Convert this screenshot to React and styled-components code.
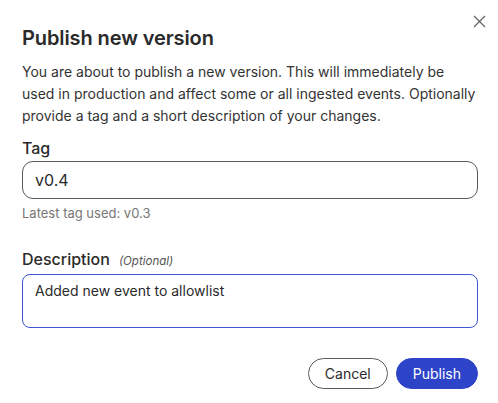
import React from "react";
import styled, { createGlobalStyle } from "styled-components";

const Global = createGlobalStyle`
  html, body { margin: 0; padding: 0; background: #ffffff; }
  body { font-family: Inter, "Noto Sans", sans-serif; color: #2b2b2b; }
  * { box-sizing: border-box; }
`;

const Dialog = styled.div`
  position: relative;
  width: 498px;
  height: 403px;
  padding: 24px 20px 0 22px;
  display: flex;
  flex-direction: column;
  background: #fff;
`;

const CloseButton = styled.button`
  position: absolute;
  top: 14px;
  right: 12px;
  width: 14px;
  height: 14px;
  padding: 0;
  border: none;
  background: none;
  display: flex;
  align-items: center;
  justify-content: center;
  cursor: pointer;
`;

const Title = styled.h2`
  margin: 0;
  font-size: 20px;
  line-height: 28px;
  font-weight: 600;
  color: #2a2a2a;
  letter-spacing: -0.1px;
`;

const Body = styled.p`
  margin: 9px 0 0;
  font-size: 14px;
  line-height: 22px;
  color: #333;
`;

const Field = styled.div`
  display: flex;
  flex-direction: column;
  margin-top: ${(p) => p.$top}px;
`;

const LabelRow = styled.label`
  display: flex;
  align-items: baseline;
  gap: 9px;
  font-size: 16px;
  line-height: 22px;
  font-weight: 500;
  color: #2a2a2a;
`;

const Optional = styled.span`
  font-size: 11.5px;
  font-style: italic;
  font-weight: 400;
  color: #555;
`;

const Input = styled.input`
  margin-top: 2px;
  width: 100%;
  height: 38px;
  border: 1px solid #5a5a5a;
  border-radius: 11px;
  padding: 0 12px;
  font-family: inherit;
  font-size: 16px;
  color: #2a2a2a;
  outline: none;
  background: #fff;
`;

const Hint = styled.div`
  margin-top: 5px;
  font-size: 13px;
  line-height: 18px;
  color: #777;
`;

const TextArea = styled.textarea`
  margin-top: 2px;
  width: 100%;
  height: 54px;
  border: 1px solid #3f55d4;
  border-radius: 8px;
  padding: 6px 12px;
  font-family: inherit;
  font-size: 14px;
  line-height: 20px;
  color: #2a2a2a;
  outline: none;
  resize: none;
  background: #fff;
`;

const Actions = styled.div`
  margin-top: 30px;
  display: flex;
  justify-content: flex-end;
  gap: 8px;
`;

const Button = styled.button`
  height: 31px;
  padding: 0 16px;
  border-radius: 999px;
  font-family: inherit;
  font-size: 14px;
  cursor: pointer;
  border: 1px solid ${(p) => (p.$primary ? "#2d44c9" : "#5a5a5a")};
  background: ${(p) => (p.$primary ? "#2d44c9" : "#fff")};
  color: ${(p) => (p.$primary ? "#fff" : "#2a2a2a")};
`;

export default function App() {
  return (
    <>
      <Global />
      <Dialog>
        <CloseButton aria-label="Close">
          <svg width="13" height="13" viewBox="0 0 13 13">
            <path d="M1 1 L12 12 M12 1 L1 12" stroke="#666" strokeWidth="1.3" />
          </svg>
        </CloseButton>
        <Title>Publish new version</Title>
        <Body>
          You are about to publish a new version. This will immediately be used
          in production and affect some or all ingested events. Optionally
          provide a tag and a short description of your changes.
        </Body>
        <Field $top={10}>
          <LabelRow>Tag</LabelRow>
          <Input defaultValue="v0.4" />
          <Hint>Latest tag used: v0.3</Hint>
        </Field>
        <Field $top={26}>
          <LabelRow>
            Description <Optional>(Optional)</Optional>
          </LabelRow>
          <TextArea defaultValue="Added new event to allowlist" />
        </Field>
        <Actions>
          <Button>Cancel</Button>
          <Button $primary>Publish</Button>
        </Actions>
      </Dialog>
    </>
  );
}
